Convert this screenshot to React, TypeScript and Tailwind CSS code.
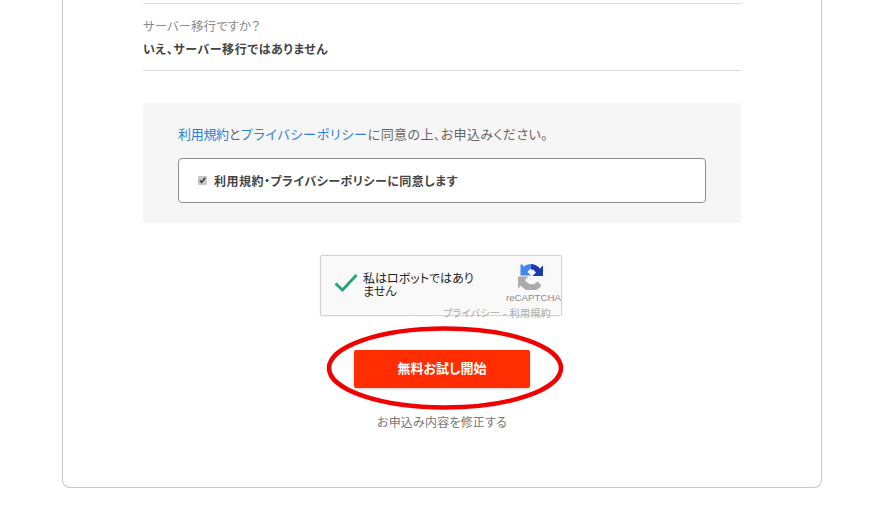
const jp = "font-['Noto_Sans_CJK_JP','Liberation_Sans',sans-serif]";

function RecaptchaLogo() {
  return (
    <svg width="27" height="27" viewBox="0 0 27 27" fill="none">
      <path d="M13.5 1A12.5 12.5 0 0 1 23 5.5L26 2.5V13H15.5L19 9.5A7.5 7.5 0 0 0 13.5 6Z" fill="#1c3aa9" />
      <path d="M3.5 2V12.5H14L10.5 9A7.5 7.5 0 0 1 13.5 6V1A12.5 12.5 0 0 0 6.5 3.5L5 1Z" fill="#4285f4" />
      <path d="M1 13.5H11.5L8 17A7.5 7.5 0 0 0 20.5 18.5L24.5 22.5A12.5 12.5 0 0 1 4 22.5L1 25.5Z" fill="#ababab" />
    </svg>
  );
}

function CheckboxRow() {
  return (
    <label className="flex h-[45px] items-center gap-[7px] rounded border border-[#8f8f8f] bg-white pl-[19px] text-[12px] font-bold tracking-[0.48px] text-[#444]">
      <input type="checkbox" readOnly checked className="m-0 size-[9px] accent-[#c8c8c8]" />
      利用規約・プライバシーポリシーに同意します
    </label>
  );
}

export default function App() {
  return (
    <div className={`h-[506px] overflow-hidden bg-white ${jp} [font-feature-settings:'palt']`}>
      <div className="relative ml-[62px] h-[488px] w-[760px] rounded-b-lg border-x border-b border-[#c9c9c9] px-[80px] pt-[3px]">
        <div className="h-[68px] border-y border-[#dcdcdc] pt-[12px]">
          <p className="text-[12.5px] leading-[19px] text-[#8c8c8c]">サーバー移行ですか？</p>
          <p className="mt-[4px] text-[12px] leading-[19px] font-bold tracking-[0.58px] text-[#444]">いえ、サーバー移行ではありません</p>
        </div>

        <div className="mt-[32px] h-[120px] rounded bg-[#f6f6f6] px-[35px] pt-[21px]">
          <p className="text-[13px] leading-[20px] tracking-[0.4px] text-[#666]">
            <a className="tracking-[-0.3px] text-[#2f7fd8]">利用規約</a>と<a className="tracking-[0.75px] text-[#2f7fd8]">プライバシーポリシー</a>に同意の上、お申込みください。
          </p>
          <div className="mt-[14px]">
            <CheckboxRow />
          </div>
        </div>

        <div className="relative mt-[32px] ml-[177px] flex h-[61px] w-[242px] items-start rounded-[2px] border border-[#d3d3d3] bg-[#f9f9f9] shadow-[0_0_3px_rgba(0,0,0,0.08)]">
          <svg width="26" height="22" viewBox="0 0 26 22" fill="none" className="mt-[16px] ml-[12px] shrink-0">
            <path d="M2.5 11.5 9.5 18 23.5 3" stroke="#1fa672" strokeWidth="2.8" />
          </svg>
          <p className="mt-[15px] ml-[4px] w-[118px] text-[12px] leading-[13px] text-[#222]">私はロボットではありません</p>
          <div className="absolute top-[7px] left-[196px]">
            <RecaptchaLogo />
          </div>
          <span className="absolute top-[35px] left-[185px] font-['Liberation_Sans',sans-serif] text-[9.7px] leading-[13px] whitespace-nowrap text-[#8a8a8a]">reCAPTCHA</span>
          <span className="absolute top-[50px] left-[122px] text-[10px] leading-[13px] tracking-[0.4px] whitespace-nowrap text-[#aaa]">プライバシー - 利用規約</span>
        </div>

        <button className="mx-auto mt-[34px] block h-[38px] w-[176px] rounded-[2px] bg-[#ff2d00] pb-[2px] text-[13px] font-bold text-white shadow-[0_1px_3px_rgba(0,0,0,0.2)]">
          無料お試し開始
        </button>

        <p className="mt-[25px] text-center text-[12px] leading-[18px] tracking-[0.2px] text-[#777]">お申込み内容を修正する</p>

        <svg width="240" height="86" viewBox="0 0 240 86" fill="none" className="absolute top-[325px] left-[262px]">
          <ellipse cx="120" cy="43" rx="116" ry="39.5" stroke="#f00000" strokeWidth="4.5" />
        </svg>
      </div>
    </div>
  );
}
